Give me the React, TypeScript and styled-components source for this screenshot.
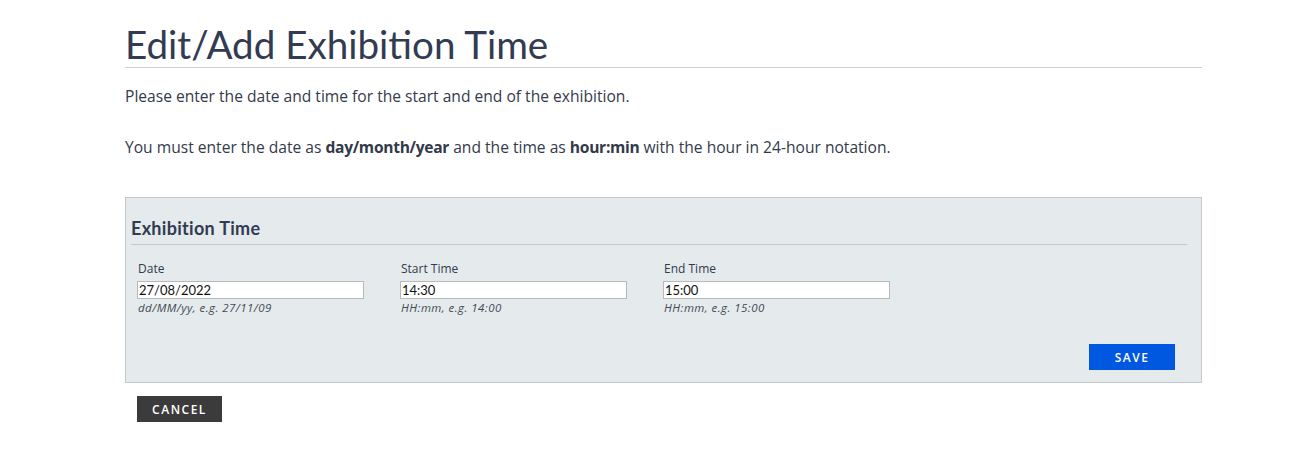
import styled, { createGlobalStyle } from 'styled-components';

const GlobalStyle = createGlobalStyle`
  body {
    margin: 0;
    background: #ffffff;
    font-family: 'Open Sans', 'Noto Sans', sans-serif;
    color: #333a4a;
  }
`;

const Page = styled.main`
  width: 1077px;
  margin-left: 125px;
  padding-top: 23px;
`;

const Title = styled.h1`
  margin: 0;
  padding-bottom: 2px;
  font-family: Lato, sans-serif;
  font-weight: 400;
  font-size: 38.6px;
  line-height: 42px;
  color: #323b51;
  border-bottom: 1px solid #cfd0d4;
`;

const Intro = styled.p`
  margin: 18px 0 0;
  font-size: 15.6px;
  line-height: 20px;
  color: #333a4a;

  & + & {
    margin-top: 31px;
  }

  strong {
    font-weight: 700;
    letter-spacing: -0.3px;
  }
`;

const Panel = styled.section`
  margin-top: 40px;
  background: #e5eaed;
  border: 1px solid #c6c9cc;
  padding: 19px 14px 12px 5px;
`;

const PanelTitle = styled.h2`
  margin: 0;
  padding-bottom: 5px;
  font-family: Lato, sans-serif;
  font-weight: 700;
  font-size: 18px;
  letter-spacing: 0.3px;
  line-height: 22px;
  color: #323b51;
  border-bottom: 1px solid #c6c9cc;
`;

const FieldRow = styled.div`
  display: grid;
  grid-template-columns: repeat(3, 263px);
  padding: 16px 0 0 6px;
`;

const Field = styled.div`
  display: flex;
  flex-direction: column;
`;

const Label = styled.label`
  font-size: 12px;
  line-height: 16px;
  color: #333a4a;
  margin-left: 1px;
`;

const Input = styled.input`
  box-sizing: border-box;
  width: 227px;
  height: 18px;
  margin-top: 4px;
  padding: 0 1px;
  border: 1px solid #b6b9bc;
  background: #ffffff;
  font-family: Lato, sans-serif;
  font-size: 13px;
  color: #111;
  outline: none;
`;

const Hint = styled.span`
  margin-top: 2px;
  margin-left: 1px;
  font-size: 11.5px;
  letter-spacing: 0.45px;
  line-height: 14px;
  font-style: italic;
  color: #444a55;
`;

const Actions = styled.div`
  display: flex;
  justify-content: flex-end;
  padding: 29px 12px 0 0;
`;

const Button = styled.button<{ $variant: 'primary' | 'dark' }>`
  height: 26px;
  padding: 0;
  border: none;
  border-radius: 0;
  font-family: 'Open Sans', sans-serif;
  font-size: 12px;
  font-weight: 600;
  letter-spacing: 1.5px;
  color: #ffffff;
  background: ${({ $variant }) => ($variant === 'primary' ? '#0058e0' : '#3b3b3b')};
  cursor: pointer;
`;

const SaveButton = styled(Button)`
  width: 86px;
`;

const CancelButton = styled(Button)`
  margin: 13px 0 0 12px;
  width: 85px;
`;

const fields = [
  { label: 'Date', value: '27/08/2022', hint: 'dd/MM/yy, e.g. 27/11/09' },
  { label: 'Start Time', value: '14:30', hint: 'HH:mm, e.g. 14:00' },
  { label: 'End Time', value: '15:00', hint: 'HH:mm, e.g. 15:00' },
];

export default function App() {
  return (
    <>
      <GlobalStyle />
      <Page>
        <Title>Edit/Add Exhibition Time</Title>
        <Intro>Please enter the date and time for the start and end of the exhibition.</Intro>
        <Intro>
          You must enter the date as <strong>day/month/year</strong> and the time as{' '}
          <strong>hour:min</strong> with the hour in 24-hour notation.
        </Intro>
        <Panel>
          <PanelTitle>Exhibition Time</PanelTitle>
          <FieldRow>
            {fields.map((f) => (
              <Field key={f.label}>
                <Label>{f.label}</Label>
                <Input defaultValue={f.value} />
                <Hint>{f.hint}</Hint>
              </Field>
            ))}
          </FieldRow>
          <Actions>
            <SaveButton $variant="primary">SAVE</SaveButton>
          </Actions>
        </Panel>
        <CancelButton $variant="dark">CANCEL</CancelButton>
      </Page>
    </>
  );
}
